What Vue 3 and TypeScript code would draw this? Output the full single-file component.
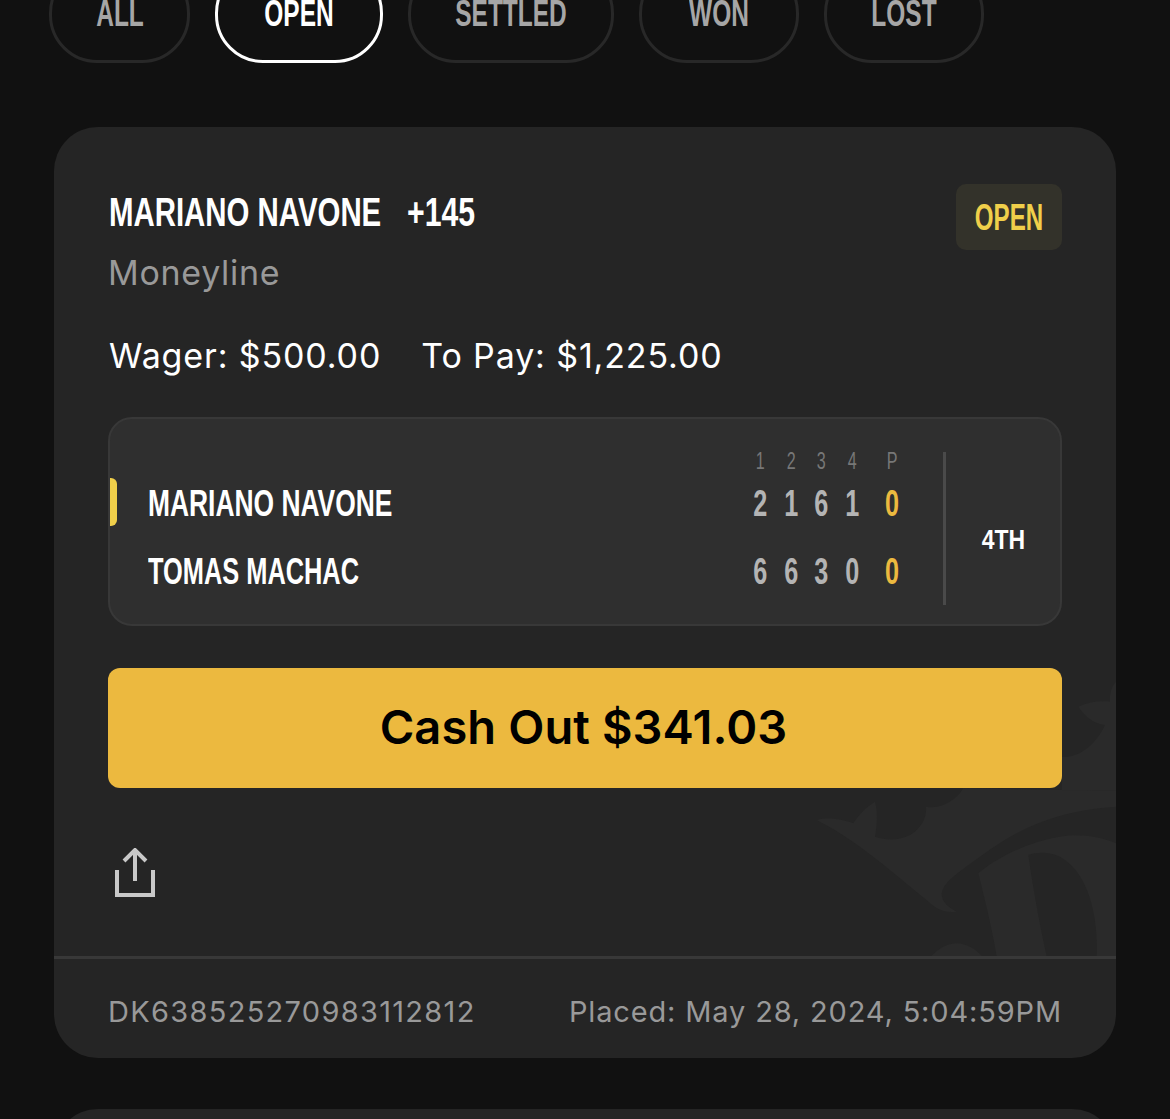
<script setup lang="ts">
interface Player {
  name: string
  sets: number[]
  points: number
  squeeze: number
}

const tabs = ['ALL', 'OPEN', 'SETTLED', 'WON', 'LOST']
const activeTab = 'OPEN'
const periods = ['1', '2', '3', '4']

const players: Player[] = [
  { name: 'MARIANO NAVONE', sets: [2, 1, 6, 1], points: 0, squeeze: 0.733 },
  { name: 'TOMAS MACHAC', sets: [6, 6, 3, 0], points: 0, squeeze: 0.705 },
]
</script>

<template>
  <div class="page">
    <nav class="tabs">
      <button
        v-for="tab in tabs"
        :key="tab"
        class="tab"
        :class="[`tab-${tab.toLowerCase()}`, { active: tab === activeTab }]"
      >
        <span class="tab-label">{{ tab }}</span>
      </button>
    </nav>

    <section class="card">
      <!-- crown logo behind the card content -->
      <svg class="watermark" viewBox="0 0 1068 894" aria-hidden="true">
        <path d="M170 480C210 470 250 480 280 490C295 465 320 440 345 425C355 460 350 500 345 530C390 545 440 540 470 510C490 490 500 470 498 440C540 450 590 420 610 385L1068 392L1068 440C900 450 780 500 660 590C590 640 545 670 545 705C548 730 570 745 590 755C550 760 525 745 500 720C400 640 290 540 170 480Z" />
        <path d="M906 290C960 295 1010 250 1035 195C1000 190 975 170 955 140C985 125 1020 122 1050 125C1048 100 1055 80 1068 65L1068 392L906 392Z" />
        <path fill-rule="evenodd" d="M655 640C700 600 800 545 900 530C960 520 1020 530 1068 550L1068 888L710 888C695 800 670 700 655 640ZM805 585C820 690 840 800 860 888L1010 888C1015 780 990 640 900 590C870 575 830 575 805 585Z" />
        <path d="M515 888C540 860 570 850 590 850C620 850 650 870 665 888Z" />
      </svg>

      <div class="card-body">
        <header class="bet-head">
          <div class="bet-title">
            <span class="bet-name">MARIANO NAVONE</span>
            <span class="bet-odds">+145</span>
          </div>
          <span class="badge"><span class="badge-label">OPEN</span></span>
        </header>
        <p class="market">Moneyline</p>

        <div class="amounts">
          <span>Wager: $500.00</span>
          <span>To Pay: $1,225.00</span>
        </div>

        <div class="score-panel">
          <span class="marker"></span>
          <div class="score-table">
            <div class="score-row heads">
              <span class="name"></span>
              <span v-for="p in periods" :key="p" class="cell">{{ p }}</span>
              <span class="cell point">P</span>
            </div>
            <div v-for="player in players" :key="player.name" class="score-row values">
              <span class="name">
                <span class="name-label" :style="{ transform: `scaleX(${player.squeeze})` }">{{ player.name }}</span>
              </span>
              <span v-for="(s, i) in player.sets" :key="i" class="cell">{{ s }}</span>
              <span class="cell point">{{ player.points }}</span>
            </div>
          </div>
          <div class="period"><span class="period-label">4TH</span></div>
        </div>

        <button class="cash-out">Cash Out $341.03</button>

        <svg class="share" viewBox="0 0 42 50" fill="none" stroke="#c9c9c9" stroke-width="4">
          <path d="M21 33V2" />
          <path d="M10 13 21 2l11 11" />
          <path d="M3 22v25h36V22" />
        </svg>
      </div>

      <footer class="card-foot">
        <span class="bet-id">DK638525270983112812</span>
        <span class="placed">Placed: May 28, 2024, 5:04:59PM</span>
      </footer>
    </section>

    <section class="card next"></section>
  </div>
</template>

<style>
html,
body {
  background: #111111;
}
</style>

<style scoped>
.page {
  height: 1119px;
  overflow: hidden;
  background: #111111;
  font-family: Inter, "Liberation Sans", sans-serif;
}

.tabs {
  display: flex;
  gap: 25px;
  height: 98px;
  margin: -35px 0 0 49px;
}

.tab {
  height: 98px;
  padding: 0;
  background: none;
  border: 3px solid #282828;
  border-radius: 48px;
  color: #a6a6a6;
  font-family: "Liberation Sans", sans-serif;
  font-size: 36px;
  font-weight: 700;
}

.tab-label {
  display: inline-block;
  transform: scaleX(0.68);
}

.tab-all { width: 141px; }
.tab-open { width: 168px; }
.tab-settled { width: 206px; }
.tab-won { width: 160px; }
.tab-lost { width: 160px; }

.tab.active {
  border-color: #ffffff;
  color: #ffffff;
}

.card {
  position: relative;
  width: 1062px;
  height: 931px;
  margin: 64px 0 0 54px;
  background: #252525;
  border-radius: 44px;
  overflow: hidden;
}

.next {
  margin-top: 51px;
}

.watermark {
  position: absolute;
  left: 706px;
  top: 533px;
  width: 356px;
  height: 298px;
  fill: #2a2a2a;
}

.card-body {
  position: relative;
  height: 832px;
  padding: 57px 54px 0;
  box-sizing: border-box;
  border-bottom: 3px solid #383838;
}

.bet-head {
  display: flex;
  justify-content: space-between;
  align-items: flex-start;
  height: 66px;
}

.bet-title {
  display: flex;
  gap: 26px;
  margin: 5px 0 0 1px;
  color: #ffffff;
  font-family: "Liberation Sans", sans-serif;
  font-size: 40px;
  font-weight: 700;
  line-height: 46px;
  white-space: nowrap;
}

.bet-name {
  width: 272px;
  transform: scaleX(0.735);
  transform-origin: left;
}

.bet-odds {
  width: 68px;
  transform: scaleX(0.755);
  transform-origin: left;
}

.badge {
  width: 106px;
  height: 66px;
  border-radius: 10px;
  background: #33322a;
  color: #f0cf4a;
  font-family: "Liberation Sans", sans-serif;
  font-size: 36px;
  font-weight: 700;
  line-height: 68px;
  text-align: center;
}

.badge-label {
  display: inline-block;
  transform: scaleX(0.67);
}

.market {
  margin: 1px 0 0;
  color: #999999;
  font-size: 34px;
  line-height: 44px;
  letter-spacing: 0.7px;
}

.amounts {
  display: flex;
  gap: 40px;
  margin: 39px 0 0 1px;
  color: #ffffff;
  font-size: 34px;
  line-height: 44px;
  letter-spacing: 0.87px;
}

.score-panel {
  position: relative;
  display: flex;
  height: 209px;
  margin-top: 39px;
  box-sizing: border-box;
  background: #2f2f2f;
  border: 2px solid #383838;
  border-radius: 24px;
}

.marker {
  position: absolute;
  left: 0;
  top: 59px;
  width: 7px;
  height: 48px;
  border-radius: 0 6px 6px 0;
  background: #f0cf4a;
}

.score-table {
  flex: 1;
  padding: 34px 0 0 38px;
}

.score-row {
  display: flex;
  align-items: center;
  font-family: "Liberation Sans", sans-serif;
}

.heads {
  height: 17px;
  color: #777777;
  font-size: 23px;
}

.values {
  height: 68px;
  color: #b4b4b4;
  font-size: 36px;
  font-weight: 700;
}

.name {
  width: 597px;
  color: #ffffff;
  white-space: nowrap;
}

.name-label {
  display: inline-block;
  transform-origin: left;
}

.cell {
  width: 30.5px;
  text-align: center;
  transform: scaleX(0.7);
}

.cell.point {
  width: 40px;
  margin-left: 5px;
  margin-right: 14px;
}

.values .point {
  color: #ecb93f;
}

.period {
  width: 114px;
  height: 153px;
  margin-top: 33px;
  border-left: 3px solid #4a4a4a;
  color: #ffffff;
  font-family: "Liberation Sans", sans-serif;
  font-size: 28px;
  font-weight: 700;
  line-height: 176px;
  text-align: center;
}

.period-label {
  display: inline-block;
  transform: scaleX(0.82);
}

.cash-out {
  display: block;
  width: 100%;
  height: 120px;
  margin-top: 42px;
  padding: 0 3px 4px 0;
  background: #ecb93f;
  border: none;
  border-radius: 12px;
  color: #000000;
  font-family: Inter, "Liberation Sans", sans-serif;
  font-size: 47px;
  font-weight: 600;
  letter-spacing: 0.1px;
}

.share {
  display: block;
  width: 42px;
  height: 50px;
  margin: 60px 0 0 6px;
}

.card-foot {
  display: flex;
  justify-content: space-between;
  padding: 33px 54px 0;
  color: #999999;
  font-size: 29px;
  line-height: 40px;
}

.bet-id {
  letter-spacing: 1.3px;
}

.placed {
  letter-spacing: 0.85px;
}
</style>
